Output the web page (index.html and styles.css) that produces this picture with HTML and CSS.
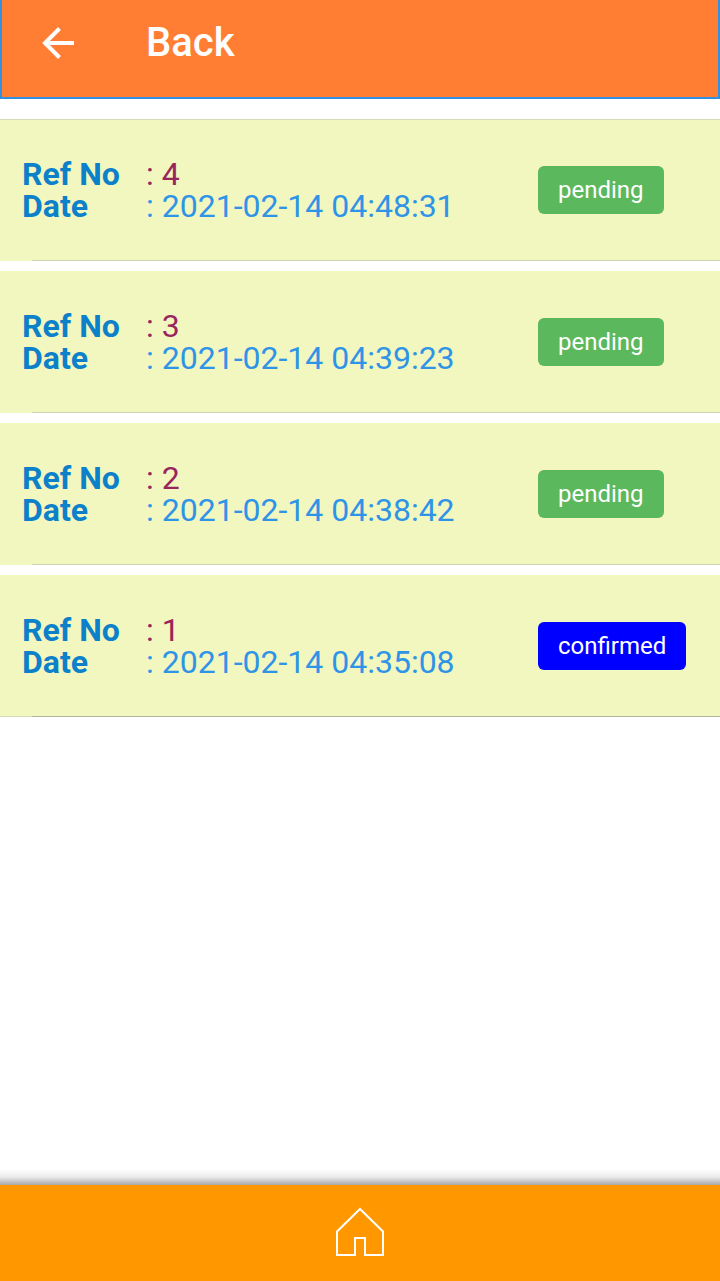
FILE: index.html
```html
<!DOCTYPE html>
<html lang="en">
<head>
<meta charset="utf-8">
<meta name="viewport" content="width=device-width, initial-scale=1">
<title>Back</title>
<link rel="stylesheet" href="styles.css">
</head>
<body>
<header class="toolbar">
  <button class="back" type="button" aria-label="Go back">
    <svg width="34" height="34" viewBox="0 0 34 34" fill="none" stroke="#fff" stroke-width="4"><path d="M33 17H5M18.500 2.500L4 17l14.500 14.500"/></svg>
  </button>
  <h1 class="title">Back</h1>
</header>
<main class="content">
  <ul class="orders">
    <li class="order">
      <dl class="details">
        <dt>Ref No</dt><dd class="ref">: 4</dd>
        <dt>Date</dt><dd class="date">: 2021-02-14 04:48:31</dd>
      </dl>
      <div class="state"><span class="badge">pending</span></div>
    </li>
    <li class="order">
      <dl class="details">
        <dt>Ref No</dt><dd class="ref">: 3</dd>
        <dt>Date</dt><dd class="date">: 2021-02-14 04:39:23</dd>
      </dl>
      <div class="state"><span class="badge">pending</span></div>
    </li>
    <li class="order">
      <dl class="details">
        <dt>Ref No</dt><dd class="ref">: 2</dd>
        <dt>Date</dt><dd class="date">: 2021-02-14 04:38:42</dd>
      </dl>
      <div class="state"><span class="badge">pending</span></div>
    </li>
    <li class="order">
      <dl class="details">
        <dt>Ref No</dt><dd class="ref">: 1</dd>
        <dt>Date</dt><dd class="date">: 2021-02-14 04:35:08</dd>
      </dl>
      <div class="state"><span class="badge confirmed">confirmed</span></div>
    </li>
  </ul>
</main>
<nav class="tabs">
  <a class="home" href="#" aria-label="Home">
    <svg width="50" height="50" viewBox="0 0 50 50" fill="none" stroke="#fff" stroke-width="2"><path d="M2 24.500L25 2l23 22.500V48H30V31H20v17H2z"/></svg>
  </a>
</nav>
</body>
</html>
```
FILE: styles.css
```css
* {
  box-sizing: border-box;
}

body {
  margin: 0;
  min-height: 100vh;
  display: flex;
  flex-direction: column;
  background: #fff;
  font-family: Roboto, sans-serif;
}

.toolbar {
  display: flex;
  align-items: center;
  gap: 71px;
  padding: 14px 39px 26px;
  background: #ff7e33;
  border: 2px solid #3190e0;
  border-top: 0;
}

.back {
  display: flex;
  padding: 0;
  border: 0;
  background: none;
}

.title {
  margin: 0;
  font-size: 40px;
  font-weight: 500;
  line-height: 57px;
  color: #fff;
}

.content {
  flex: 1;
  padding-top: 20px;
}

.orders {
  display: flex;
  flex-direction: column;
  gap: 10px;
  margin: 0;
  padding: 0;
  list-style: none;
}

.order {
  display: grid;
  grid-template-columns: 3fr 1fr;
  align-items: start;
  padding: 39px 0 38px;
  background:
    linear-gradient(#cfd3ae, #cfd3ae) 32px 100% / 100% 1px no-repeat,
    #f2f7c0;
}

.order:first-child {
  border-top: 1px solid #d5d9b6;
  padding-top: 38px;
}

.order:last-child {
  background:
    linear-gradient(#b3b79a, #b3b79a) 32px 100% / 100% 1px no-repeat,
    linear-gradient(#d5d9b6, #d5d9b6) 0 100% / 100% 1px no-repeat,
    #f2f7c0;
}

.details {
  display: grid;
  grid-template-columns: 124px 1fr;
  margin: 0;
  padding-left: 22px;
  font-size: 32px;
  line-height: 32px;
}

.details dt {
  font-weight: 700;
  color: #0c81c9;
}

.details dd {
  margin: 0;
}

.ref {
  color: #98265c;
}

.date {
  color: #3094e6;
}

.state {
  padding: 8px 0 9px;
}

.badge {
  display: inline-block;
  vertical-align: top;
  margin-left: -2px;
  padding: 8px 20px;
  border-radius: 6px;
  background: #5cb85c;
  color: #fff;
  font-size: 24px;
  line-height: 32px;
}

.confirmed {
  background: #00f;
}

.tabs {
  position: sticky;
  bottom: 0;
  display: flex;
  justify-content: center;
  padding: 22px 0 24px;
  background: #ff9800;
}

.tabs::before {
  content: "";
  position: absolute;
  left: 0;
  right: 0;
  bottom: 100%;
  height: 16px;
  background: linear-gradient(rgba(0, 0, 0, 0), rgba(0, 0, 0, 0.08) 50%, rgba(0, 0, 0, 0.34));
}

.home {
  display: flex;
}
```
